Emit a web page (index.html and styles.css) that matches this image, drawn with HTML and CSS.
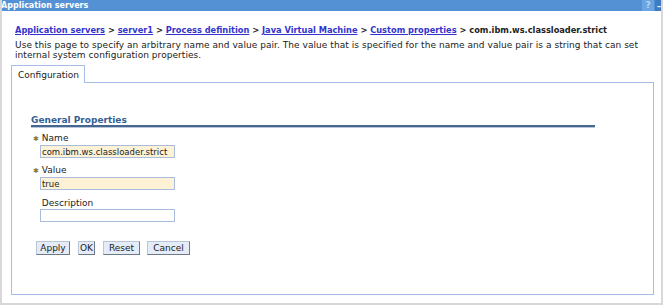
FILE: index.html
```html
<!DOCTYPE html>
<html lang="en">
<head>
  <meta charset="UTF-8" />
  <title>Application servers</title>
  <link rel="stylesheet" href="styles.css">
</head>
<body>
  <div class="window">
    <div class="titlebar">
      <span class="title">Application servers</span>
      <span class="tb-icons">
        <span class="tb-btn help">?</span>
        <span class="tb-btn min">&ndash;</span>
      </span>
    </div>

    <div class="content">
      <div class="crumbs">
        <a href="#">Application servers</a> &gt;
        <a href="#">server1</a> &gt;
        <a href="#">Process definition</a> &gt;
        <a href="#">Java Virtual Machine</a> &gt;
        <a href="#">Custom properties</a> &gt;
        <span>com.ibm.ws.classloader.strict</span>
      </div>
      <p class="intro">Use this page to specify an arbitrary name and value pair. The value that is specified for the name and value pair is a string that can set internal system configuration properties.</p>

      <div class="tabs">
        <div class="tab">Configuration</div>
      </div>
      <div class="panel">
        <div class="section-title">General Properties</div>

        <div class="field">
          <label><span class="req">&#10033;</span> Name</label>
          <input type="text" class="req-input" value="com.ibm.ws.classloader.strict">
        </div>
        <div class="field">
          <label><span class="req">&#10033;</span> Value</label>
          <input type="text" class="req-input" value="true">
        </div>
        <div class="field desc">
          <label><span class="req"></span> Description</label>
          <input type="text" value="">
        </div>

        <div class="buttons">
          <button class="b-apply">Apply</button>
          <button class="b-ok">OK</button>
          <button class="b-reset">Reset</button>
          <button class="b-cancel">Cancel</button>
        </div>
      </div>
    </div>
  </div>
</body>
</html>
```

FILE: styles.css
```css
* {margin: 0; padding: 0; box-sizing: border-box;}
body {
  font-family: 'DejaVu Sans', Verdana, sans-serif;
  font-size: 9px;
  color: #222;
  background: #fff;
}

.window {
  width: 663px;
  height: 305px;
  border: 2px solid #d8d8d8;
  border-top: none;
  overflow: hidden;
}

.titlebar {
  height: 11px;
  background: #5391d4;
  display: flex;
  justify-content: space-between;
  align-items: center;
  margin: 0 -2px;
  padding-left: 1px;
}
.title {
  color: #fff;
  font-weight: bold;
  font-size: 8px;
  line-height: 11px;
}
.tb-icons {
  display: flex;
  gap: 1px;
  height: 11px;
}
.tb-btn {
  height: 11px;
  font-size: 9px;
  line-height: 11px;
  text-align: center;
  font-weight: bold;
}
.tb-btn.help { background: #6aa4e2; width: 12px; color: #b8d4f2; }
.tb-btn.min { background: #3d7cc4; width: 8px; color: #e8f0fa; line-height: 13px; }

.content {
  padding: 14px 0 0 9px;
}

.crumbs {
  font-weight: bold;
  font-size: 8.25px;
  line-height: 11px;
  padding-left: 4px;
}
.crumbs a {
  color: #3434cc;
}

.intro {
  line-height: 10px;
  margin-top: 4px;
  padding-left: 4px;
  padding-right: 20px;
  letter-spacing: 0.05px;
}

.tabs {
  margin-top: 5px;
  display: flex;
}
.tab {
  border: 1px solid #a7bde6;
  border-bottom: none;
  height: 18px;
  width: 74px;
  padding: 4px 0 0 6px;
  line-height: 11px;
  background: #fff;
  position: relative;
  z-index: 1;
  margin-bottom: -1px;
}

.panel {
  width: 643px;
  height: 213px;
  border: 1px solid #a7bde6;
  padding: 33px 0 0 19px;
}

.section-title {
  width: 564px;
  font-weight: bold;
  color: #335f96;
  line-height: 9px;
  border-bottom: 2px solid #46668e;
  box-shadow: 0 1px 0 #b8c8dc;
  margin-bottom: 6px;
}

.field {
  padding-left: 2px;
  margin-bottom: 7px;
}
.field.desc {
  margin-top: 8px;
}
.field label {
  display: block;
  line-height: 11px;
}
.req {
  display: inline-block;
  width: 6px;
  color: #8c7a2a;
  font-size: 7px;
}
.field input {
  display: block;
  margin-left: 7px;
  width: 135px;
  height: 13px;
  border: 1px solid #a9bcdc;
  font-family: 'DejaVu Sans', Verdana, sans-serif;
  font-size: 8.5px;
  padding: 0 1px;
  color: #222;
  background: #fff;
}
.field input.req-input {
  background: #fdf1d6;
}

.buttons {
  display: flex;
  gap: 8px;
  margin-top: 19px;
  margin-left: -19px;
  padding-left: 24px;
}
.buttons button {
  height: 14px;
  padding: 0;
  font-family: 'DejaVu Sans', Verdana, sans-serif;
  font-size: 9px;
  color: #222;
  background: #e4ecf8;
  border: 1px solid #bac6d8;
  border-right-color: #6f7888;
  border-bottom-color: #6f7888;
}
.b-apply { width: 34px; }
.b-ok { width: 17px; }
.b-reset { width: 37px; }
.b-cancel { width: 43px; margin-left: -1px; }
```
